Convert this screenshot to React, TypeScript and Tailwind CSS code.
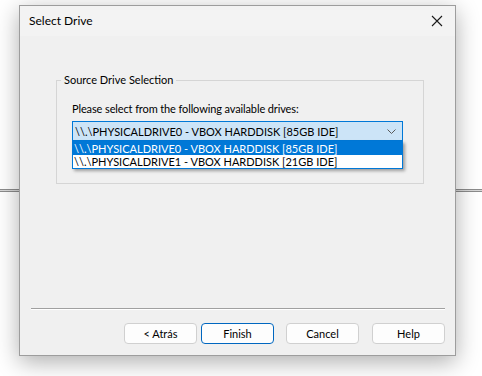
const drives = [
  '\\\\.\\PHYSICALDRIVE0 - VBOX HARDDISK [85GB IDE]',
  '\\\\.\\PHYSICALDRIVE1 - VBOX HARDDISK [21GB IDE]',
];

function WinButton({ label, primary }: { label: string; primary?: boolean }) {
  return (
    <button
      className={
        'w-[73px] h-[21px] rounded-[4px] bg-[#fdfdfd] text-[11px] leading-none text-black flex items-center justify-center ' +
        (primary ? 'border border-[#0067c0]' : 'border border-[#d0d0d0]')
      }
    >
      {label}
    </button>
  );
}

export default function App() {
  return (
    <div className="relative w-[482px] h-[376px] overflow-hidden bg-white pt-[5px] pl-[19px] font-['Lato',sans-serif] text-[11px] text-black">
      {/* line of the window behind */}
      <div className="absolute left-0 right-0 top-[189px] h-[3px] border-t border-b border-[#8c8c8c] bg-[#d8d8d8]" />

      {/* Dialog */}
      <div className="relative flex flex-col w-[437px] h-[351px] border border-[#9d9d9d] bg-[#f0f0f0] shadow-[0_6px_22px_rgba(0,0,0,0.32)]">
        {/* Title bar */}
        <div className="flex items-center justify-between h-[30px] bg-[#f3f3f3] pl-[9px] pr-[9px]">
          <span className="text-[12px] leading-none">Select Drive</span>
          <svg width="12" height="12" viewBox="0 0 12 12" className="mr-[3px]">
            <path d="M1 1 L11 11 M11 1 L1 11" stroke="#1a1a1a" strokeWidth="1.1" fill="none" />
          </svg>
        </div>

        {/* Body */}
        <div className="flex flex-col flex-1">
          <fieldset className="ml-[36px] mr-[31px] mt-[37px] border border-[#d5d5d5] pb-[42px]">
            <legend className="ml-[4px] px-[3px] leading-[14px]">Source Drive Selection</legend>
            <div className="pl-[15px] pr-[20px]">
              <p className="mt-[15px] leading-[14px] tracking-[-0.12px]">Please select from the following available drives:</p>

              <div className="relative mt-[5px]">
                <div className="flex items-center justify-between h-[20px] border border-[#0078d7] bg-[#cce4f7] pl-[2px] pr-[6px]">
                  <span className="leading-none">{drives[0]}</span>
                  <svg width="9" height="5" viewBox="0 0 9 5">
                    <path d="M0.5 0.5 L4.5 4.5 L8.5 0.5" stroke="#5a5a5a" strokeWidth="1" fill="none" />
                  </svg>
                </div>

                {/* open list */}
                <div className="absolute left-0 right-0 top-[20px] border border-[#0078d7] bg-white shadow-[2px_2px_3px_rgba(0,0,0,0.35)]">
                  {drives.map((d, i) => (
                    <div
                      key={d}
                      className={
                        'h-[13px] leading-[13px] pl-[1px] ' +
                        (i === 0 ? 'bg-[#0078d7] text-white' : 'bg-white text-black')
                      }
                    >
                      {d}
                    </div>
                  ))}
                </div>
              </div>
            </div>
          </fieldset>

          <div className="mt-auto ml-[11px] mr-[10px] h-[2px] border-t border-[#a0a0a0] border-b border-b-white" />

          <div className="flex items-center mt-[13px] mb-[11px] pr-[10px] justify-end">
            <WinButton label="< Atrás" />
            <div className="ml-[4px]">
              <WinButton label="Finish" primary />
            </div>
            <div className="ml-[12px]">
              <WinButton label="Cancel" />
            </div>
            <div className="ml-[13px]">
              <WinButton label="Help" />
            </div>
          </div>
        </div>
      </div>
    </div>
  );
}
